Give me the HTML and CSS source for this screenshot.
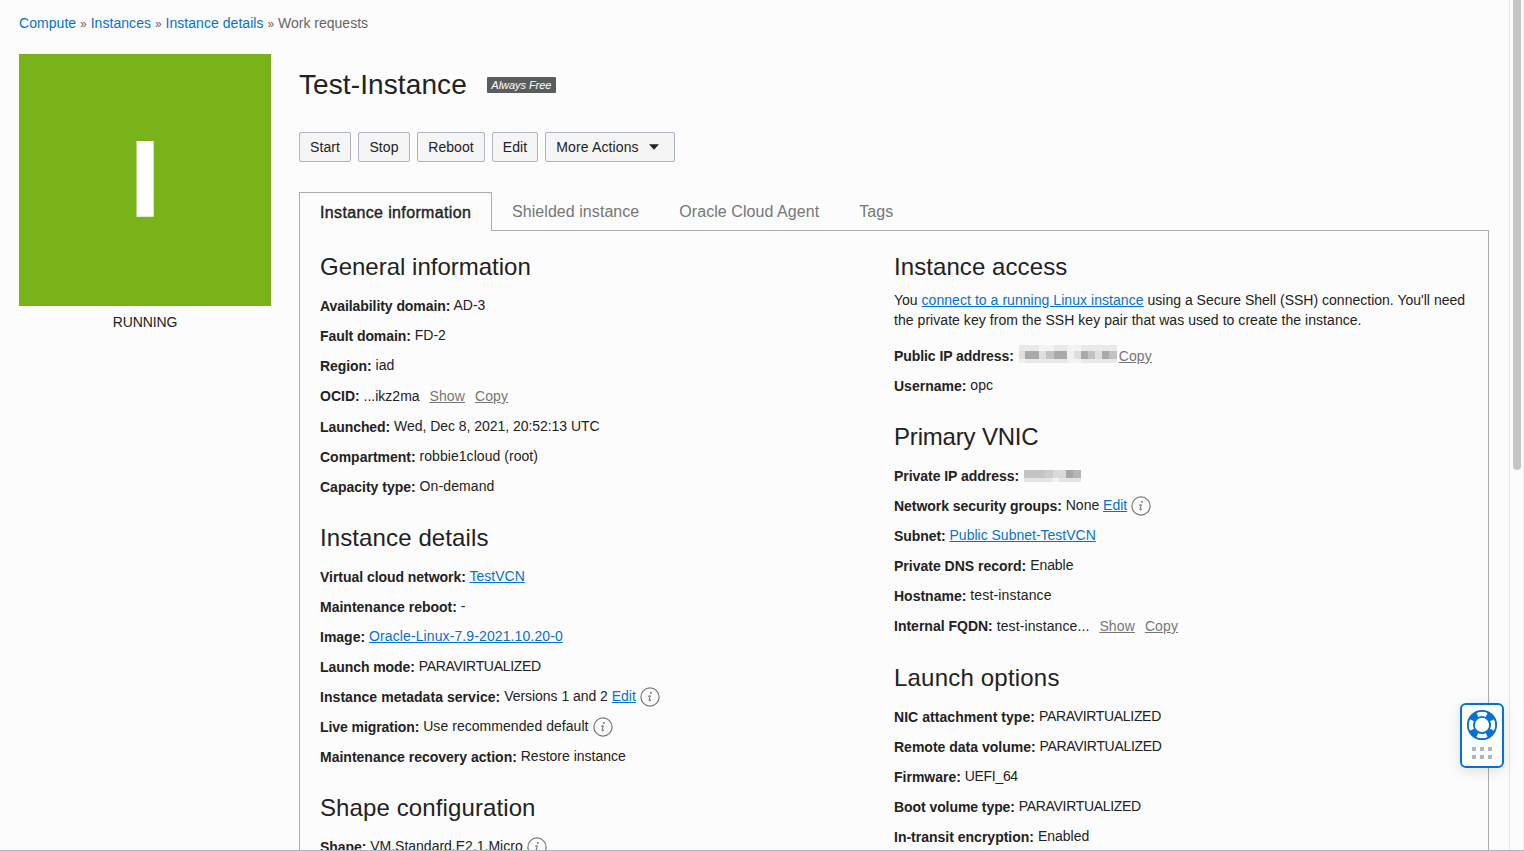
FILE: index.html
```html
<!DOCTYPE html>
<html lang="en">
<head>
<meta charset="utf-8">
<title>Test-Instance</title>
<link rel="stylesheet" href="styles.css">
</head>
<body>
<svg class="defs" width="0" height="0"><defs>
<symbol id="info" viewBox="0 0 20 20"><circle cx="10" cy="10" r="9.1" fill="none" stroke="#77797b" stroke-width="1.2"/><circle cx="10.900" cy="5.900" r=".9" fill="#666"/><path d="M8 9.400 L10.300 8.700 L9.100 13.100 Q8.900 14.300 9.900 13.800 L11.100 12.800" fill="none" stroke="#666" stroke-width="1"/></symbol>
</defs></svg>
<div class="page">
  <nav class="crumbs"><a>Compute</a> <i>»</i> <a>Instances</a> <i>»</i> <a>Instance details</a> <i>»</i> Work requests</nav>
  <div class="body">
    <aside class="side"><div class="tile"><span>I</span></div><div class="state">RUNNING</div></aside>
    <main class="main">
      <header class="title"><h1>Test-Instance</h1><span class="badge">Always Free</span></header>
      <div class="actions">
        <button class="w52">Start</button><button class="w52">Stop</button><button class="w68">Reboot</button><button class="w46">Edit</button><button class="w130">More Actions<svg width="10" height="6" viewBox="0 0 10 6"><path d="M0 .3H10L5 5.7Z" fill="#222"/></svg></button>
      </div>
      <div class="tabs"><div class="tab on">Instance information</div><div class="tab">Shielded instance</div><div class="tab">Oracle Cloud Agent</div><div class="tab">Tags</div></div>
      <div class="panel">
        <div class="col">
          <h2>General information</h2>
          <p class="row"><b class="snug">Availability domain:</b> AD-3</p>
          <p class="row"><b class="snug">Fault domain:</b> FD-2</p>
          <p class="row"><b class="snug">Region:</b> iad</p>
          <p class="row tall"><b>OCID:</b> ...ikz2ma <a class="sub">Show</a><a class="sub">Copy</a></p>
          <p class="row"><b class="snug">Launched:</b> <span class="tight">Wed, Dec 8, 2021, 20:52:13 UTC</span></p>
          <p class="row"><b>Compartment:</b> <span class="loose">robbie1cloud (root)</span></p>
          <p class="row"><b>Capacity type:</b> <span class="wide">On-demand</span></p>
          <h2 class="h-wide">Instance details</h2>
          <p class="row"><b class="tight">Virtual cloud network:</b> <a class="link">TestVCN</a></p>
          <p class="row"><b>Maintenance reboot:</b> -</p>
          <p class="row"><b>Image:</b> <a class="link wide">Oracle-Linux-7.9-2021.10.20-0</a></p>
          <p class="row"><b class="snug">Launch mode:</b> <span class="caps">PARAVIRTUALIZED</span></p>
          <p class="row"><b class="loose">Instance metadata service:</b> <span class="tight">Versions 1 and 2</span> <a class="link">Edit</a> <svg class="info"><use href="#info"/></svg></p>
          <p class="row"><b class="snug">Live migration:</b> <span class="loose">Use recommended default</span> <svg class="info nudge"><use href="#info"/></svg></p>
          <p class="row"><b>Maintenance recovery action:</b> Restore instance</p>
          <h2 class="h-wide">Shape configuration</h2>
          <p class="row"><b class="snug">Shape:</b> VM.Standard.E2.1.Micro <svg class="info"><use href="#info"/></svg></p>
        </div>
        <div class="col">
          <h2 class="h-loose">Instance access</h2>
          <p class="para">You <a class="link loose">connect to a running Linux instance</a> using a Secure Shell (SSH) connection. You'll need<br><span class="loose">the private key from the SSH key pair that was used to create the instance.</span></p>
          <p class="row level"><b class="snug">Public IP address:</b> <svg class="mask1" viewBox="0 0 98 18" shape-rendering="crispEdges"><path fill="#e9e9e9" d="M0 0H98V18H0Z"/><path fill="#f3f3f3" d="M20 0h15v6h-15zM49 0h13v18h-13z"/><path fill="#dedede" d="M0 6h98v8H0z"/><path fill="#aaa" d="M6 6h14v8h-14zM35 6h13v8h-13zM62 6h7v8h-7zM83 6h7v8h-7z"/><path fill="#c2c2c2" d="M27 6h8v8h-8zM69 6h7v8h-7zM90 6h8v8h-8z"/><path fill="#f1f1f1" d="M48 6h7v8h-7zM0 14h6v4H0z"/></svg><a class="link gray wide">Copy</a></p>
          <p class="row"><b>Username:</b> <span class="wide">opc</span></p>
          <h2 class="h-tight">Primary VNIC</h2>
          <p class="row"><b class="tight">Private IP address:</b> <svg class="mask2" viewBox="0 0 57 12" shape-rendering="crispEdges"><path fill="#e4e4e4" d="M0 0h57v12H0z"/><path fill="#c3c3c3" d="M0 0h21v8H0z"/><path fill="#cdcdcd" d="M21 0h8v8h-8z"/><path fill="#d9d9d9" d="M29 0h13v8h-13z"/><path fill="#a6a6a6" d="M42 0h7v8h-7z"/><path fill="#b5b5b5" d="M49 0h8v8h-8z"/><path fill="#f1f1f1" d="M28 8h7v4h-7z"/></svg></p>
          <p class="row"><b class="tight">Network security groups:</b> None <a class="link">Edit</a> <svg class="info"><use href="#info"/></svg></p>
          <p class="row"><b class="snug">Subnet:</b> <a class="link">Public Subnet-TestVCN</a></p>
          <p class="row"><b>Private DNS record:</b> <span class="snug">Enable</span></p>
          <p class="row"><b>Hostname:</b> <span class="airy">test-instance</span></p>
          <p class="row tall"><b>Internal FQDN:</b> <span class="wide">test-instance...</span> <a class="sub">Show</a><a class="sub">Copy</a></p>
          <h2 class="h-airy">Launch options</h2>
          <p class="row"><b class="loose">NIC attachment type:</b> <span class="caps">PARAVIRTUALIZED</span></p>
          <p class="row"><b>Remote data volume:</b> <span class="caps">PARAVIRTUALIZED</span></p>
          <p class="row"><b>Firmware:</b> <span class="caps">UEFI_64</span></p>
          <p class="row"><b class="snug">Boot volume type:</b> <span class="caps">PARAVIRTUALIZED</span></p>
          <p class="row"><b>In-transit encryption:</b> Enabled</p>
        </div>
      </div>
    </main>
  </div>
</div>
<div class="track"><div class="thumb"></div></div>
<div class="help">
  <svg width="32" height="32" viewBox="0 0 32 32"><circle cx="16" cy="16" r="11" fill="none" stroke="#0572ce" stroke-width="7"/><g fill="none" stroke="#fff" stroke-width="4.6"><path d="M11.300 5.940A11.100 11.100 0 0 1 20.700 5.940M26.060 11.300A11.100 11.100 0 0 1 26.060 20.700M20.700 26.060A11.100 11.100 0 0 1 11.300 26.060M5.940 20.700A11.100 11.100 0 0 1 5.940 11.300"/></g><circle cx="16" cy="16" r="14.200" fill="none" stroke="#0572ce" stroke-width="1.700"/><circle cx="16" cy="16" r="8" fill="#fff" stroke="#0572ce" stroke-width="1.700"/></svg>
  <svg width="20" height="12" viewBox="0 0 20 12" fill="#b0b7c3"><path d="M0 0h4v4H0zM8 0h4v4H8zM16 0h4v4h-4zM0 8h4v4H0zM8 8h4v4H8zM16 8h4v4h-4z"/></svg>
</div>
</body>
</html>
```
FILE: styles.css
```css
* { box-sizing: border-box; }
html, body { margin: 0; height: 100%; overflow: hidden; }
body { display: flex; background: #fcfcfc; color: #222; font: 14px/20px "Liberation Sans", Arial, sans-serif; border-bottom: 1px solid #adb5c5; height: 851px; }
.defs { position: absolute; }
h1, h2, p { margin: 0; font-weight: 400; }
.page { flex: 1; height: 850px; overflow: hidden; padding: 13px 20px 0 19px; }
.crumbs { height: 20px; color: #666; }
.crumbs a, .link { color: #0572ce; }
.crumbs a { letter-spacing: .05px; }
.crumbs i { font-style: normal; font-size: 12px; }
.body { display: flex; gap: 28px; padding-top: 21px; }
.side { width: 252px; flex: none; }
.tile { height: 252px; background: #78b31a; display: flex; align-items: center; justify-content: center; padding-bottom: 1px; }
.tile span { color: #fff; font: bold 107px/107px "Liberation Sans", Arial, sans-serif; -webkit-text-stroke: 1.600px #fff; }
.state { text-align: center; line-height: 20px; padding-top: 6px; letter-spacing: -.1px; }
.main { flex: 1; }
.title { display: flex; align-items: center; height: 61px; gap: 20px; }
h1 { font-size: 28px; line-height: 34px; letter-spacing: .1px; }
.badge { background: #5a5d60; color: #fff; font-style: italic; font-size: 11px; line-height: 16px; width: 69px; text-align: center; border-radius: 1px; letter-spacing: -.05px; }
.actions { display: flex; gap: 7px; margin-top: 17px; height: 30px; }
button { display: flex; align-items: center; justify-content: center; padding: 0; border: 1px solid #adb5c3; border-radius: 2px; background: #f5f5f5; color: #222; font: 14px "Liberation Sans", Arial, sans-serif; letter-spacing: .08px; }
button svg { margin-left: 10px; margin-right: 5px; }
.w52 { width: 52px; }
.w68 { width: 68px; }
.w46 { width: 46px; }
.w130 { width: 130px; letter-spacing: .13px; }
.tabs { display: flex; margin-top: 30px; height: 39px; font-size: 16px; line-height: 40px; color: #767676; letter-spacing: .06px; }
.tab { margin-right: 40px; white-space: nowrap; }
.on { width: 193px; margin-right: 20px; padding-left: 20px; border: 1px solid #aaacae; border-bottom: 0; background: #fcfcfc; color: #222; -webkit-text-stroke: .4px #222; letter-spacing: .36px; z-index: 1; }
.panel { display: grid; grid-template-columns: 574px 1fr; margin-top: -1px; height: 900px; width: 1190px; border: 1px solid #aaacae; padding: 0 0 0 20px; }
h2 { font-size: 24px; line-height: 48px; height: 48px; margin-top: 12px; white-space: nowrap; }
.row { height: 30px; line-height: 28px; white-space: nowrap; }
.row b { vertical-align: -1px; line-height: 20px; }
.tall { height: 31px; }
.tall, .level { line-height: 30px; }
.tall b, .level b { vertical-align: 0; }
.link { text-decoration: underline; }
.gray, .sub { color: #767676; text-decoration: underline; }
.sub { margin-left: 6px; letter-spacing: .12px; }
.sub + .sub { margin-left: 10px; }
.info { width: 20px; height: 20px; vertical-align: -6px; }
.nudge { margin-left: 1px; }
.para { height: 50px; margin-top: -1px; white-space: nowrap; letter-spacing: .01px; }
.para + .row { margin-top: 1px; }
.mask1 { width: 98px; height: 18px; margin: 0 2px 0 1px; vertical-align: -2px; }
.mask2 { width: 57px; height: 12px; margin-left: 1px; vertical-align: -2px; }
.tight { letter-spacing: -.04px; }
.snug { letter-spacing: -.07px; }
.loose { letter-spacing: .05px; }
.wide { letter-spacing: .11px; }
.airy { letter-spacing: .16px; }
.caps { letter-spacing: -.32px; }
.h-tight { letter-spacing: -.18px; }
.h-loose { letter-spacing: .08px; }
.h-wide { letter-spacing: .11px; }
.h-airy { letter-spacing: .2px; }
.track { width: 15px; height: 850px; border-left: 1px solid #e6e6e6; border-right: 1px solid #eee; padding-left: 3px; }
.thumb { width: 8px; height: 470px; border-radius: 0 0 4px 4px; background: #c5c5c5; }
.help { position: absolute; left: 1460px; top: 703px; width: 44px; height: 65px; border: 2px solid #0572ce; border-radius: 6px; background: #fff; box-shadow: 0 3px 14px rgba(0,0,0,.12); display: flex; flex-direction: column; align-items: center; padding-top: 4px; gap: 6px; }
```
